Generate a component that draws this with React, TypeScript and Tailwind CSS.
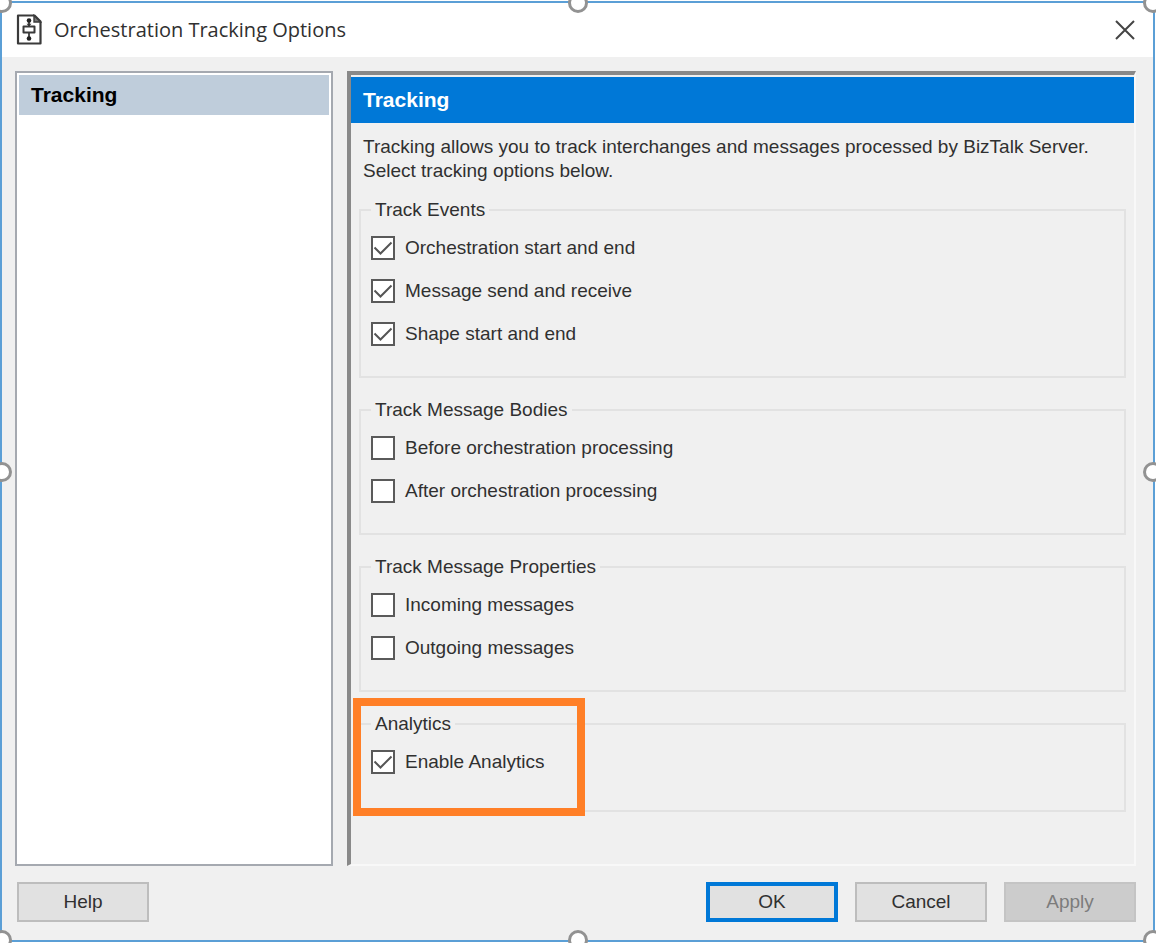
import React, { useState } from 'react';

interface TrackingOption {
    id: string;
    label: string;
    checked: boolean;
}

interface TrackingGroup {
    title: string;
    highlighted?: boolean;
    options: TrackingOption[];
}

const groups: TrackingGroup[] = [
    {
        title: 'Track Events',
        options: [
            { id: 'orchestration', label: 'Orchestration start and end', checked: true },
            { id: 'message', label: 'Message send and receive', checked: true },
            { id: 'shape', label: 'Shape start and end', checked: true },
        ],
    },
    {
        title: 'Track Message Bodies',
        options: [
            { id: 'before', label: 'Before orchestration processing', checked: false },
            { id: 'after', label: 'After orchestration processing', checked: false },
        ],
    },
    {
        title: 'Track Message Properties',
        options: [
            { id: 'incoming', label: 'Incoming messages', checked: false },
            { id: 'outgoing', label: 'Outgoing messages', checked: false },
        ],
    },
    {
        title: 'Analytics',
        highlighted: true,
        options: [{ id: 'analytics', label: 'Enable Analytics', checked: true }],
    },
];

// Round grips on the edges of the frame
const handlePositions = [
    'left-0 top-0',
    'left-1/2 top-0',
    'left-full top-0',
    'left-0 top-1/2',
    'left-full top-1/2',
    'left-0 top-full',
    'left-1/2 top-full',
    'left-full top-full',
];

const DocumentIcon = () => (
    <svg className="w-[26px] h-8" viewBox="0 0 26 32" fill="none" stroke="#3a3a3a" strokeWidth="2.2">
        <path d="M2 1.500H18.500L24.500 7.500V29.500H2Z" strokeLinejoin="round" />
        <path d="M18 1.500V8H24.500Z" fill="#777" strokeWidth="1.4" />
        <path d="M13 6V25" strokeWidth="1.8" />
        <path d="M7.500 12.500H18.500V18.500H7.500Z" fill="#fff" strokeWidth="2" strokeLinejoin="round" />
        <circle cx="13" cy="6.500" r="2.300" fill="#222" stroke="none" />
        <circle cx="13" cy="24.500" r="2.300" fill="#222" stroke="none" />
        <path d="M10.500 9.800H15.500L13 12.500Z" fill="#333" stroke="none" />
    </svg>
);

const CheckRow: React.FC<{ option: TrackingOption }> = ({ option }) => {
    const [checked, setChecked] = useState(option.checked);

    return (
        <div className="flex items-center gap-2.5 h-6">
            <span className="relative w-6 h-6 shrink-0">
                <input
                    id={option.id}
                    type="checkbox"
                    checked={checked}
                    onChange={() => setChecked(!checked)}
                    className="block appearance-none w-6 h-6 bg-white border-2 border-[#5a5a5a]"
                />
                {checked && (
                    <svg
                        className="absolute inset-0 w-6 h-6 pointer-events-none"
                        viewBox="0 0 24 24"
                        fill="none"
                        stroke="#555"
                        strokeWidth="2"
                    >
                        <path d="M3.500 11.500L9.500 17.500L20.500 6.500" />
                    </svg>
                )}
            </span>
            <label htmlFor={option.id}>{option.label}</label>
        </div>
    );
};

const GroupBox: React.FC<{ group: TrackingGroup }> = ({ group }) => (
    <div className="relative">
        <fieldset className="min-h-25 border-2 border-[#e2e2e2] px-2.5 pt-3.5 pb-[30px]">
            <legend className="px-1">{group.title}</legend>
            <div className="flex flex-col gap-[19px]">
                {group.options.map((option) => (
                    <CheckRow key={option.id} option={option} />
                ))}
            </div>
        </fieldset>
        {group.highlighted && (
            <div className="absolute -left-1.5 -top-3.5 -bottom-1 w-58 border-8 border-[#ff7f27] pointer-events-none" />
        )}
    </div>
);

const buttonClass = 'w-33 h-10 bg-[#e1e1e1] border-2 border-[#bdbdbd]';

const App: React.FC = () => (
    <div className="min-h-screen pt-px pb-px pr-px overflow-hidden flex bg-white font-['Liberation_Sans',Arial,sans-serif] text-[19px] leading-6 text-[#303030]">
        <div className="relative flex-1 flex flex-col bg-[#f0f0f0] border-2 border-[#5b9fd6]">
            <header className="flex items-center gap-3 h-[54px] pl-3.5 pr-3.5 bg-white">
                <DocumentIcon />
                <h1 className="flex-1 font-['Open_Sans','Noto_Sans',sans-serif] text-[20px]">
                    Orchestration Tracking Options
                </h1>
                <button aria-label="Close" className="p-1">
                    <svg className="w-5 h-5" viewBox="0 0 20 20" fill="none" stroke="#444" strokeWidth="2">
                        <path d="M1 1L19 19M19 1L1 19" />
                    </svg>
                </button>
            </header>
            <main className="flex-1 flex gap-3.5 pt-3.5 pl-[13px] pr-[17px]">
                <nav className="w-[318px] shrink-0 bg-white border-2 border-[#a5a9b0] p-0.5">
                    <a href="#tracking" className="block h-10 px-3 leading-10 bg-[#bfcddb] font-bold text-[21px] text-black">
                        Tracking
                    </a>
                </nav>
                <section
                    id="tracking"
                    className="flex-1 pt-0.5 border-t-4 border-l-4 border-r-2 border-b-2 border-t-[#898989] border-l-[#898989] border-r-[#f8f8f8] border-b-[#f8f8f8]"
                >
                    <h2 className="h-[46px] px-3 leading-[46px] bg-[#0078d7] font-bold text-[21px] text-white">Tracking</h2>
                    <p className="px-3 pt-3 pb-[15px]">
                        Tracking allows you to track interchanges and messages processed by BizTalk Server.
                        <br />
                        Select tracking options below.
                    </p>
                    <div className="flex flex-col gap-5 px-2">
                        {groups.map((group) => (
                            <GroupBox key={group.title} group={group} />
                        ))}
                    </div>
                </section>
            </main>
            <footer className="flex gap-[17px] pt-4 pb-[18px] pl-[15px] pr-[17px]">
                <button className={buttonClass}>Help</button>
                <span className="flex-1" />
                <button className="w-33 h-10 bg-[#e1e1e1] border-4 border-[#0078d7]">OK</button>
                <button className={buttonClass}>Cancel</button>
                <button disabled className="w-33 h-10 bg-[#cccccc] text-[#7c7c7c] border-2 border-[#c4c4c4]">
                    Apply
                </button>
            </footer>
            {handlePositions.map((position) => (
                <span
                    key={position}
                    className={`absolute w-5 h-5 -translate-x-1/2 -translate-y-1/2 rounded-full bg-white border-3 border-[#929292] ${position}`}
                />
            ))}
        </div>
    </div>
);

export default App;
